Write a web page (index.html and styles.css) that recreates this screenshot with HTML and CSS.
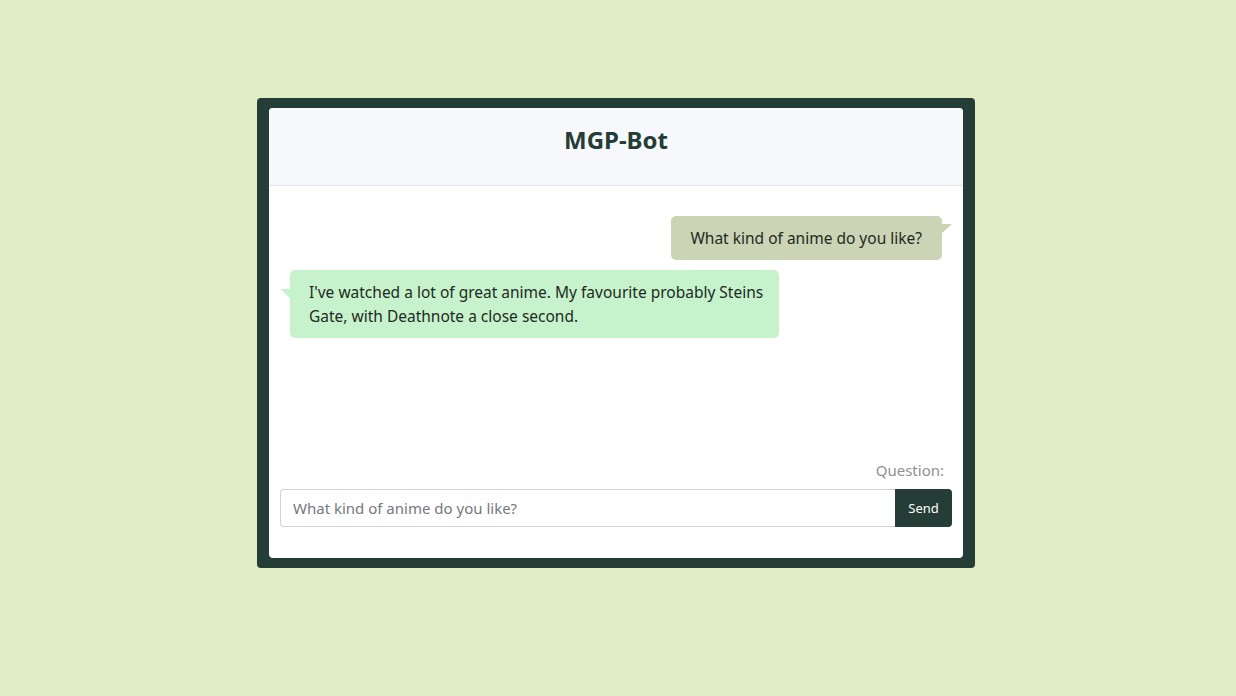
FILE: index.html
```html
<!DOCTYPE html>
<html lang="en">
<head>
<meta charset="utf-8">
<title>MGP-Bot</title>
<link rel="stylesheet" href="styles.css">
</head>
<body>
<div class="frame">
  <div class="card">
    <div class="card-header">
      <h1 class="title">MGP-Bot</h1>
    </div>
    <div class="card-body">
      <div class="messages">
        <div class="bubble bubble-user">What kind of anime do you like?</div>
        <div class="bubble bubble-bot">I've watched a lot of great anime. My favourite probably Steins Gate, with Deathnote a close second.</div>
      </div>
      <label class="question-label" for="q">Question:</label>
      <div class="input-group">
        <input id="q" class="input" type="text" placeholder="What kind of anime do you like?">
        <button class="send" type="button">Send</button>
      </div>
    </div>
  </div>
</div>
</body>
</html>
```
FILE: styles.css
```css
* { box-sizing: border-box; }
html, body { margin: 0; padding: 0; }
body {
  background: #e0eec6;
  font-family: "Noto Sans", "Open Sans", sans-serif;
  color: #212529;
  display: flex;
  justify-content: center;
  padding-top: 98px;
  padding-right: 4px;
  min-height: 696px;
}
.frame {
  width: 718px;
  height: 470px;
  background: #243d36;
  border-radius: 4px;
  padding: 10px 12px;
}
.card {
  background: #fff;
  border-radius: 4px;
  height: 100%;
  display: flex;
  flex-direction: column;
  overflow: hidden;
}
.card-header {
  height: 78px;
  background: #f7f8fb;
  border-bottom: 1px solid #e1e4e9;
  display: flex;
  align-items: center;
  justify-content: center;
  padding-bottom: 15px;
}
.title {
  margin: 0;
  font-size: 24px;
  font-weight: 700;
  color: #243d36;
}
.card-body {
  flex: 1;
  display: flex;
  flex-direction: column;
  padding: 30px 11px 31px;
}
.messages {
  flex: 1;
  display: flex;
  flex-direction: column;
  gap: 10px;
}
.bubble {
  position: relative;
  font-size: 15.5px;
  line-height: 24px;
  padding: 10px 20px 10px 19px;
  border-radius: 5px;
  color: #1f2a24;
}
.bubble::after {
  content: "";
  position: absolute;
  width: 0;
  height: 0;
  border-top: 9px solid transparent;
}
.bubble-user {
  align-self: flex-end;
  margin-right: 10px;
  background: #cbd4b4;
}
.bubble-user::after {
  top: 8px;
  right: -10px;
  border-top-color: #cbd4b4;
  border-right: 10px solid transparent;
}
.bubble-bot {
  align-self: flex-start;
  margin-left: 10px;
  max-width: 489px;
  padding-right: 14px;
  background: #c6f3cb;
}
.bubble-bot::after {
  top: 19px;
  left: -10px;
  border-top-color: #c6f3cb;
  border-left: 10px solid transparent;
}
.question-label {
  align-self: flex-end;
  margin-right: 8px;
  margin-bottom: 7px;
  font-size: 15px;
  line-height: 24px;
  color: #8e9194;
  font-weight: 400;
}
.input-group {
  display: flex;
  height: 38px;
}
.input {
  flex: 1;
  min-width: 0;
  border: 1px solid #ced4da;
  border-right: none;
  border-radius: 4px 0 0 4px;
  padding: 6px 12px;
  font-family: inherit;
  font-size: 15px;
  color: #495057;
  outline: none;
}
.input::placeholder { color: #74797e; }
.send {
  width: 57px;
  border: none;
  background: #243d36;
  color: #fff;
  font-family: inherit;
  font-size: 13px;
  border-radius: 0 4px 4px 0;
  padding: 0;
}
```
